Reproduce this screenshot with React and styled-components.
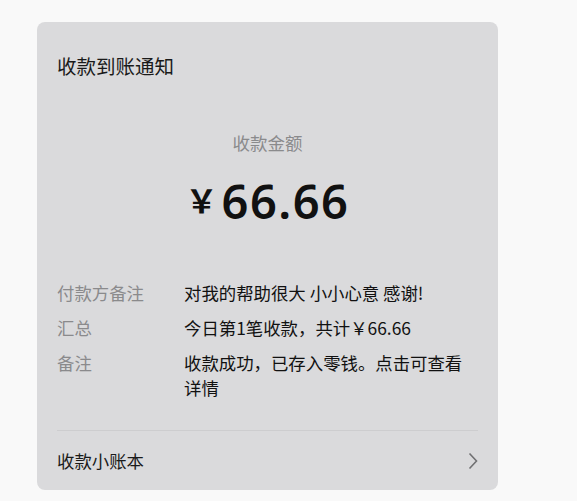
import React from "react";
import styled, { createGlobalStyle } from "styled-components";

const GlobalStyle = createGlobalStyle`
  body {
    margin: 0;
    background: #f9f9f9;
    font-family: "Noto Sans CJK SC", "Noto Sans", sans-serif;
  }
`;

const Page = styled.div`
  padding: 22px 0 0 37px;
`;

const Card = styled.div`
  width: 461px;
  height: 468px;
  box-sizing: border-box;
  background: #dadadc;
  border-radius: 8px;
  padding: 32px 20px 0;
  display: flex;
  flex-direction: column;
`;

const Title = styled.div`
  font-size: 19.5px;
  line-height: 24px;
  color: #1a1a1a;
`;

const AmountLabel = styled.div`
  margin-top: 53px;
  text-align: center;
  font-size: 17.5px;
  line-height: 24px;
  color: #8a8a8c;
`;

const Amount = styled.div`
  margin-top: 18px;
  display: flex;
  justify-content: center;
  align-items: center;
  gap: 4px;
  color: #111;
  height: 56px;
`;

const Currency = styled.span`
  font-size: 32px;
  font-weight: 700;
  margin-top: -4px;
`;

const Value = styled.span`
  font-family: "Noto Sans", sans-serif;
  font-size: 47px;
  font-weight: 600;
  letter-spacing: 1.5px;
`;

const Details = styled.div`
  margin-top: 51px;
  display: flex;
  flex-direction: column;
  gap: 10px;
`;

const Row = styled.div`
  display: grid;
  grid-template-columns: 127px 1fr;
  font-size: 17.4px;
  line-height: 25px;
`;

const Label = styled.div`
  color: #8a8a8c;
`;

const Text = styled.div`
  color: #111;
  padding-right: 12px;
`;

const Footer = styled.div`
  margin-top: auto;
  border-top: 1px solid #cdcdcf;
  height: 59px;
  display: flex;
  align-items: center;
  justify-content: space-between;
  font-size: 17.4px;
  color: #1a1a1a;
`;

const Chevron = () => (
  <svg width="10" height="18" viewBox="0 0 10 18" fill="none">
    <path d="M1.5 1.5L8.5 9L1.5 16.5" stroke="#707072" strokeWidth="1.6" />
  </svg>
);

const rows = [
  ["付款方备注", "对我的帮助很大 小小心意 感谢!"],
  ["汇总", "今日第1笔收款，共计￥66.66"],
  ["备注", "收款成功，已存入零钱。点击可查看详情"],
];

export default function App() {
  return (
    <>
      <GlobalStyle />
      <Page>
        <Card>
          <Title>收款到账通知</Title>
          <AmountLabel>收款金额</AmountLabel>
          <Amount>
            <Currency>￥</Currency>
            <Value>66.66</Value>
          </Amount>
          <Details>
            {rows.map(([label, text]) => (
              <Row key={label}>
                <Label>{label}</Label>
                <Text>{text}</Text>
              </Row>
            ))}
          </Details>
          <Footer>
            <span>收款小账本</span>
            <Chevron />
          </Footer>
        </Card>
      </Page>
    </>
  );
}
